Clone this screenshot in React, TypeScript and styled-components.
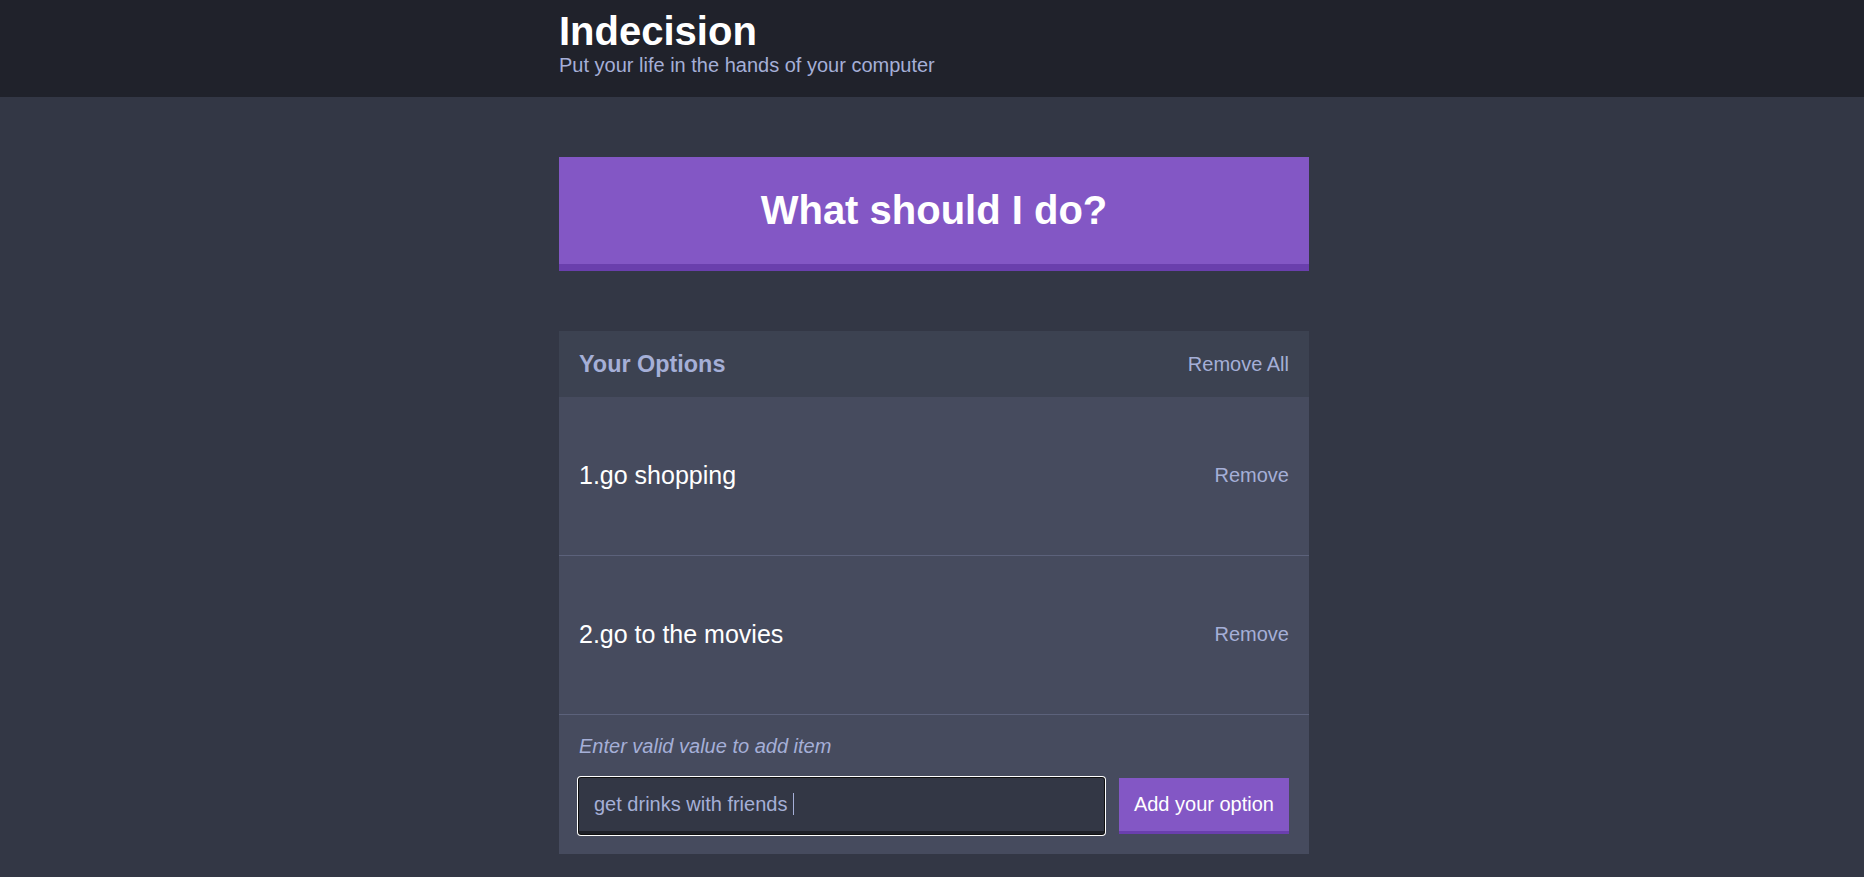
import React from "react";
import styled, { createGlobalStyle } from "styled-components";

const GlobalStyle = createGlobalStyle`
  html, body {
    margin: 0;
    padding: 0;
    min-height: 100%;
  }
  body {
    background: #333745;
    font-family: "Liberation Sans", Arial, Helvetica, sans-serif;
    font-size: 20px;
    color: #ffffff;
  }
  * { box-sizing: border-box; }
`;

const Container = styled.div`
  width: 750px;
  margin-left: calc(50% - 373px);
`;

const Header = styled.header`
  background: #20222b;
  padding: 9px 0 20px;
`;

const Title = styled.h1`
  margin: 0;
  font-size: 40px;
  font-weight: bold;
  color: #ffffff;
`;

const Subtitle = styled.h2`
  margin: 0;
  font-size: 20px;
  font-weight: 500;
  color: #a5afd7;
`;

const Main = styled(Container)`
  padding-top: 60px;
`;

const BigButton = styled.button`
  display: block;
  width: 100%;
  background: #8357c5;
  border: none;
  border-bottom: 7.5px solid #6a3fad;
  color: #ffffff;
  font-family: inherit;
  font-weight: bold;
  font-size: 40px;
  padding: 31px 30px;
  margin: 0 0 60px;
  cursor: pointer;
`;

const Widget = styled.section`
  background: #464b5e;
  margin-bottom: 22px;
`;

const WidgetHeader = styled.div`
  background: #3c4251;
  display: flex;
  justify-content: space-between;
  align-items: center;
  padding: 20px;
`;

const WidgetTitle = styled.h3`
  margin: 0;
  font-size: 23.4px;
  line-height: 26px;
  font-weight: bold;
  color: #a5afd7;
`;

const LinkButton = styled.button`
  background: none;
  border: none;
  padding: 0;
  color: #a5afd7;
  font-family: inherit;
  font-size: 20px;
  cursor: pointer;
`;

const Option = styled.div`
  display: flex;
  justify-content: space-between;
  align-items: center;
  padding: 40px 20px;
  border-bottom: 1px solid #5c627b;
`;

const OptionText = styled.p`
  margin: 24.4px 0;
  color: #ffffff;
  font-size: 25px;
  font-weight: 500;
`;

const ErrorText = styled.p`
  margin: 20px 0 0;
  padding: 0 20px;
  color: #a5afd7;
  font-style: italic;
  font-size: 20px;
`;

const AddForm = styled.form`
  display: flex;
  padding: 20px;
`;

const InputWrap = styled.div`
  position: relative;
  display: flex;
  flex-grow: 1;
  margin-right: 15px;
`;

const Input = styled.input`
  flex: 1;
  background: #333745;
  border: none;
  border-bottom: 3.75px solid #1d1f27;
  border-radius: 2px;
  color: #a5afd7;
  caret-color: transparent;
  font-family: inherit;
  font-size: 20px;
  padding: 15px;
  outline: none;
  box-shadow: 0 0 0 1px #101010, 0 0 0 2px #ffffff;
`;

const Caret = styled.span`
  position: absolute;
  left: 214px;
  top: 15px;
  width: 1px;
  height: 22px;
  background: #a5afd7;
  pointer-events: none;
`;

const AddButton = styled.button`
  background: #8357c5;
  border: none;
  border-bottom: 3.75px solid #6a3fad;
  color: #ffffff;
  font-family: inherit;
  font-size: 20px;
  font-weight: 500;
  padding: 15px;
  cursor: pointer;
`;

const options = ["go shopping", "go to the movies"];

export default function App() {
  return (
    <>
      <GlobalStyle />
      <Header>
        <Container>
          <Title>Indecision</Title>
          <Subtitle>Put your life in the hands of your computer</Subtitle>
        </Container>
      </Header>
      <Main>
        <BigButton type="button">What should I do?</BigButton>
        <Widget>
          <WidgetHeader>
            <WidgetTitle>Your Options</WidgetTitle>
            <LinkButton type="button">Remove All</LinkButton>
          </WidgetHeader>
          {options.map((o, i) => (
            <Option key={o}>
              <OptionText>
                {i + 1}.{o}
              </OptionText>
              <LinkButton type="button">Remove</LinkButton>
            </Option>
          ))}
          <ErrorText>Enter valid value to add item</ErrorText>
          <AddForm onSubmit={(e) => e.preventDefault()}>
            <InputWrap>
              <Input type="text" name="option" defaultValue="get drinks with friends " />
              <Caret />
            </InputWrap>
            <AddButton type="submit">Add your option</AddButton>
          </AddForm>
        </Widget>
      </Main>
    </>
  );
}
